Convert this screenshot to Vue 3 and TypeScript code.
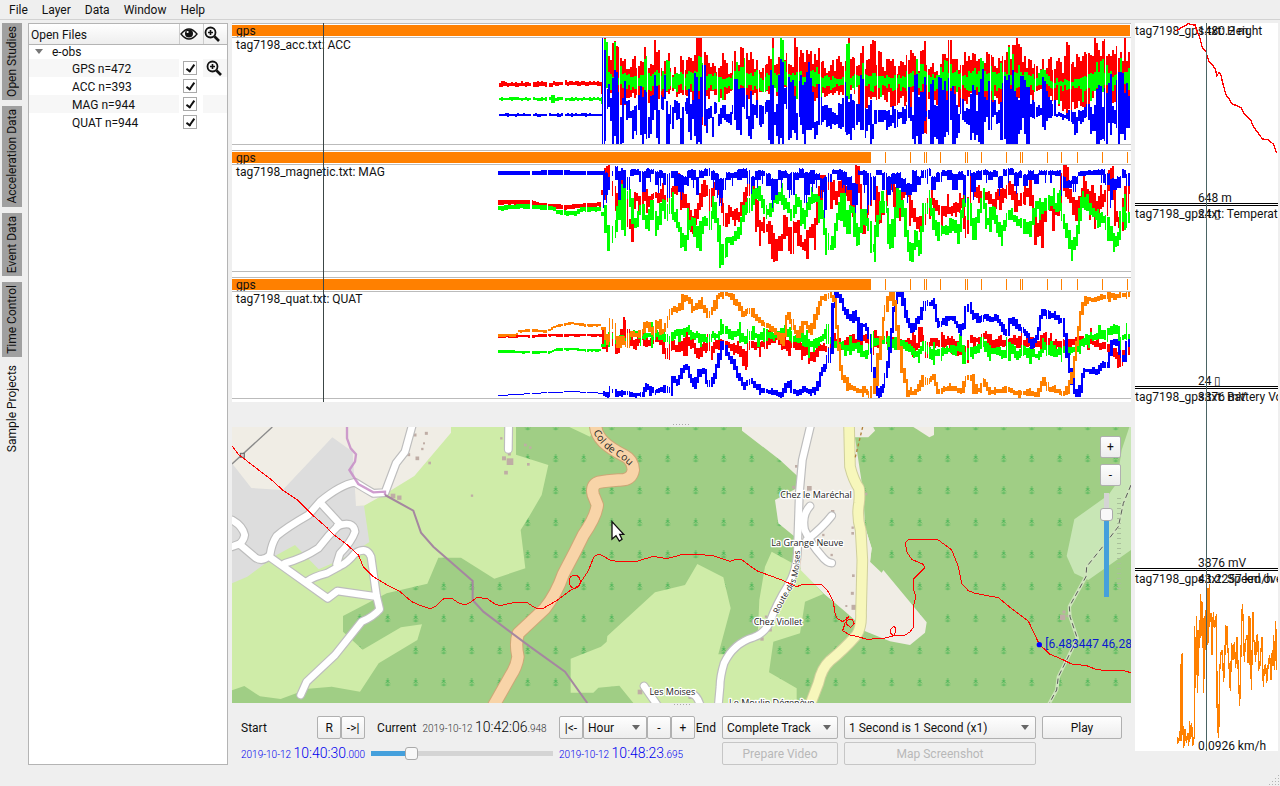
<script setup lang="ts">
import { ref, computed } from 'vue'

type Pt = [number, number]
type Band = [number, number, number]
interface Channel { color: string; d: string }
interface Track { file: string; full: boolean; origin: number; channels: Channel[] }

const menus = ['File', 'Layer', 'Data', 'Window', 'Help']
const tabs = [
  { label: 'Open Studies', docked: true, size: 'a' },
  { label: 'Acceleration Data', docked: true, size: 'b' },
  { label: 'Event Data', docked: true, size: 'c' },
  { label: 'Time Control', docked: true, size: 'd' },
  { label: 'Sample Projects', docked: false, size: 'e' },
]
const files = ref([
  { name: 'GPS n=472', on: true, zoom: true },
  { name: 'ACC n=393', on: true, zoom: false },
  { name: 'MAG n=944', on: true, zoom: false },
  { name: 'QUAT n=944', on: true, zoom: false },
])

function random(seed: number): () => number {
  let s = seed
  return () => {
    s = (s * 1664525 + 1013904223) % 4294967296
    return s / 4294967296
  }
}

function nums(src: string): number[] {
  return src.trim().split(/[\s,]+/).map(Number)
}
function pairs(src: string): Pt[] {
  const n = nums(src)
  const out: Pt[] = []
  for (let i = 0; i + 1 < n.length; i += 2) out.push([n[i], n[i + 1]])
  return out
}
function triples(src: string): Band[] {
  const n = nums(src)
  const out: Band[] = []
  for (let i = 0; i + 2 < n.length; i += 3) out.push([n[i], n[i + 1], n[i + 2]])
  return out
}
function at(pts: Pt[], x: number): number {
  if (x <= pts[0][0]) return pts[0][1]
  for (let i = 1; i < pts.length; i++) {
    if (x <= pts[i][0]) {
      const [x0, y0] = pts[i - 1]
      const [x1, y1] = pts[i]
      return y0 + ((y1 - y0) * (x - x0)) / (x1 - x0)
    }
  }
  return pts[pts.length - 1][1]
}
function nearest(bands: Band[], x: number): Band {
  let best = bands[0]
  for (const b of bands) if (Math.abs(b[0] - x) < Math.abs(best[0] - x)) best = b
  return best
}
// Peaks last two columns; elsewhere the curve stays at or below its resting level.
function spiky(pts: Pt[], x: number, rest: number): number {
  for (const [px, py] of pts) if (Math.abs(px - x) < 2) return py
  return Math.max(rest, at(pts, x))
}

const START = 498
const BURST = 602
const END = 1129
const gaps = new Set(nums('530 531 547 563 586 610 611 613 614 626 628 641 654 666 668 670 708 710 724 748 750 765 792 827 829 869 872 885 924 926 928 940 966 969 982 1007 1022 1047 1062 1106 1121 1127'))

function bar(x: number, w: number, top: number, bottom: number): string {
  const t = Math.round(top)
  const h = Math.max(1, Math.round(bottom) - t)
  return `M${x} ${t}h${w}v${h}h${-w}z`
}

function lineChannel(color: string, src: string, seed: number, calm: number, wild: number): Channel {
  const pts = pairs(src)
  const rnd = random(seed)
  let d = ''
  let prev = at(pts, START)
  for (let x = START; x <= END;) {
    const w = rnd() < 0.4 ? 3 : 2
    const y = at(pts, x)
    const burst = x >= BURST
    const up = burst ? 1 + rnd() * wild * (rnd() < 0.25 ? 2 : 0.6) : calm
    const down = burst ? 2 + rnd() * wild * (rnd() < 0.25 ? 2 : 0.6) : calm + rnd()
    const t = Math.min(y, burst ? prev : y) - up
    const b = Math.max(y, burst ? prev : y) + down
    prev = y
    for (let k = 0; k < w; k++) if (!gaps.has(x + k) && x + k <= END) d += bar(x + k, 1, t, b)
    x += w
  }
  return { color, d }
}

const accBlue = triples(`602 38 144 604 48 144 607 84 110 610 90 130 612 78 144 615 64 144 618 90 144 621 96 144 624 80 110 627 100 125 630 108 120
632 110 140 635 105 135 637 95 110 639 86 144 643 88 144 646 88 144 648 100 144 650 95 135 653 73 120 655 73 144 658 100 144 661 95 110 664 75 100 667 98 144
670 105 130 674 100 115 677 100 125 680 100 144 684 98 115 688 88 140 692 80 130 694 73 144 697 75 144 699 75 144 702 65 125 706 108 140 709 105 120 712 110 138
715 100 115 719 108 130 722 105 120 728 112 125 732 105 115 735 77 130 738 88 140 742 88 110 746 95 120 748 110 144 751 90 140 754 100 120 760 105 130 764 100 115
768 88 140 771 68 144 773 105 130 776 88 140 779 58 144 781 60 144 785 85 110 787 75 144 790 80 140 794 78 144 796 90 140 799 75 125 802 70 140 804 78 144
807 60 130 810 72 130 815 115 144 818 77 125 822 105 125 828 105 130 834 112 125 840 95 130 845 80 135 848 80 140 852 100 130 856 104 125 861 70 130 864 108 140
868 105 125 871 100 144 876 110 125 882 110 122 888 110 130 893 105 130 899 112 120 904 105 125 908 86 128 912 103 144 915 74 144 918 95 144 921 90 144 924 75 130
927 110 120 931 78 144 935 105 140 939 76 144 943 75 144 946 77 144 950 90 130 953 84 144 957 105 144 960 97 120 967 105 128 972 85 140 976 110 144 979 77 144
981 68 144 985 95 125 989 80 130 993 100 120 997 110 125 1000 82 140 1004 75 144 1008 73 144 1012 70 144 1016 95 144 1020 75 130 1024 80 140 1027 85 144
1032 100 120 1038 105 118 1042 76 130 1046 90 125 1052 100 120 1058 112 118 1064 113 120 1070 110 125 1075 112 140 1080 110 125 1086 104 120 1092 105 135
1096 85 144 1100 85 144 1104 87 144 1108 72 135 1112 105 130 1116 80 128 1119 70 144 1124 72 144 1127 82 128`)

const accRedTop = pairs(`604 38 606 46 610 60 612 39 615 40 618 45 621 55 624 60 628 65 632 54 636 64 640 60 644 46 648 63 652 63 655 44 657 44 661 67 665 60 668 48 671 66 675 64
678 68 681 58 684 66 688 55 692 58 696 38 699 38 702 60 705 55 708 58 713 67 718 60 722 55 726 62 730 68 735 55 738 62 741 50 744 58 748 55 751 52 755 60
758 66 762 62 766 60 770 50 772 38 774 60 778 50 781 38 784 58 788 55 792 60 795 38 797 60 801 50 804 58 807 52 810 53 814 57 818 52 822 62 826 66 830 60
835 62 840 58 843 65 846 42 848 42 852 60 857 62 861 45 864 60 868 56 871 38 873 38 876 66 879 54 883 62 888 62 891 56 895 66 900 60 905 58 909 52 914 55
918 62 923 42 926 60 932 62 938 66 943 58 949 40 953 58 958 60 962 58 967 52 972 55 975 52 979 54 983 60 989 50 994 62 1000 55 1005 52 1008 38 1013 38
1017 38 1020 50 1025 60 1030 55 1034 62 1038 67 1042 60 1046 64 1049 50 1052 62 1056 60 1061 64 1067 42 1070 58 1074 60 1078 52 1082 50 1086 46 1090 48
1095 38 1098 48 1102 45 1104 38 1108 52 1112 50 1116 38 1120 55 1124 38 1127 52`)
const accRedBottom = triples(`603 38 90 612 0 98 622 0 102 635 0 95 648 0 100 660 0 99 668 0 92 680 0 96 690 0 98 699 0 118 703 0 122 708 0 96 720 0 99 735 0 90 750 0 97 765 0 90 775 0 92 802 0 103
808 0 103 816 0 97 822 0 98 834 0 96 845 0 95 852 0 90 862 0 110 870 0 102 878 0 99 886 0 98 892 0 110 900 0 102 908 0 105 914 0 96 924 0 130 930 0 100 938 0 104 943 0 112 950 0 98
962 0 104 972 0 98 985 0 110 996 0 100 1010 0 95 1028 0 98 1038 0 94 1050 0 98 1057 0 104 1066 0 112 1076 0 105 1086 0 110 1092 0 96 1104 0 98 1112 0 108 1121 0 134 1127 0 100`)
const accGreenTop = pairs(`603 38 605 40 607 72 611 75 614 44 617 76 620 64 624 74 632 78 640 77 645 58 648 75 656 70 660 76 667 62 672 76 681 72 684 77 688 70 692 72 699 56 702 64 706 76
715 75 722 78 730 78 736 62 741 66 743 58 748 76 757 72 762 78 768 74 772 50 774 72 781 38 784 60 790 74 797 70 803 76 808 60 811 72 816 66 820 76 832 78
842 76 846 43 848 43 851 76 858 74 862 61 866 76 874 74 882 78 890 76 900 77 908 72 916 58 921 64 928 74 934 76 940 68 945 60 950 66 955 72 966 75 974 66 981 59
986 74 990 68 996 76 1000 62 1008 48 1012 52 1018 64 1024 72 1030 74 1036 80 1040 68 1043 68 1050 80 1060 81 1074 80 1082 76 1090 74 1096 62 1101 60 1106 66 1112 76 1120 60 1125 72 1129 66`)

function accChannels(): Channel[] {
  const r = random(71)
  let red = ''
  let green = ''
  let blue = ''
  for (let x = 499; x < BURST; x += 2) {
    if (gaps.has(x)) continue
    const lift = x > 552 ? 2 : 0
    const tail = x > 599 ? 8 : 0
    red += bar(x, 2, 83 - lift / 2 - Math.floor(r() * 2.4), 86 - lift / 2 + Math.floor(r() * 1.6) + tail)
    const g = x > 549 && x < 554
    green += bar(x, 2, 98 - (g ? 3 : Math.floor(r() * 1.6)), 100 + (g ? 3 : Math.floor(r() * 1.6)) + tail / 2)
    blue += bar(x, 2, 114 - Math.floor(r() * 1.4), 116 + Math.floor(r() * 1.3))
  }
  const accGaps = new Set(nums('619 637 647 660 671 684 703 717 733 745 758 764 787 798 820 844 855 864 877 896 907 927 949 961 990 1003 1035 1053 1070 1087 1105 1117'))
  for (let x = BURST; x <= END; x += 2) {
    const rt = spiky(accRedTop, x, 52) + (r() - 0.3) * 14
    const rb = nearest(accRedBottom, x)[2] + (r() - 0.6) * 10
    const gt = spiky(accGreenTop, x, 73) + (r() - 0.5) * 5
    const gb = 88 + (r() - 0.5) * 8 + (r() < 0.05 ? 12 : 0)
    const b = nearest(accBlue, x)
    const span = b[2] - b[1]
    const long = span > 40
    const bt = b[1] + r() * (long ? 24 : span * 0.3) * (r() < 0.55 ? 1 : 0.1)
    const bb = long && r() < 0.5 ? b[2] : b[2] - r() * Math.min(12, span * 0.3)
    for (let k = 0; k < 2; k++) {
      const c = x + k
      if (c > END || accGaps.has(c)) continue
      if (c > 603) {
        red += bar(c, 1, Math.max(38, rt), rb)
        green += bar(c, 1, Math.max(38, gt), gb)
      }
      if (c !== 603 && c !== 606) blue += bar(c, 1, Math.max(38, c === 602 ? 38 : bt), c < 605 ? 144 : Math.min(144, bb))
    }
  }
  return [{ color: '#ff0000', d: red }, { color: '#00ff00', d: green }, { color: '#0000ff', d: blue }]
}

const magRed = `498 202 530 202 540 205 565 207 600 204 603 168 606 178 610 190 614 210 618 185 620 175 624 200 627 230 630 205 634 195 638 202 642 185 646 205 650 195 656 195 662 200
668 190 674 190 680 188 684 205 688 220 690 230 694 215 698 205 702 185 708 195 714 185 720 200 724 225 728 212 736 215 742 210 746 185 752 190 758 230 764 225 770 228 773 255
776 235 779 250 784 215 787 240 790 250 793 215 796 240 802 245 808 230 812 235 818 190 826 180 832 200 836 190 840 185 846 195 852 200 855 170 858 200 862 230 868 200 872 190 878 220 884 195
890 178 896 210 902 190 906 190 912 220 916 220 920 225 924 210 928 200 934 205 940 210 946 210 952 210 958 205 962 200 964 245 968 185 974 190 980 200 986 195 992 205
998 190 1002 195 1008 186 1014 205 1020 200 1026 190 1030 205 1034 230 1038 235 1042 210 1046 200 1050 208 1056 213 1062 175 1068 195 1074 222 1080 190 1086 195 1092 210
1098 200 1104 195 1108 180 1110 170 1114 215 1119 225 1122 195 1127 190`
const magGreen = `498 208 520 206 540 207 552 208 556 212 575 213 580 209 600 209 603 225 607 248 610 238 614 225 618 195 620 235 624 195 628 190 632 230 636 215 640 205 644 230 650 205
656 230 660 195 664 215 668 200 672 215 678 230 682 245 688 220 692 225 696 245 700 225 706 220 712 208 717 240 720 255 724 240 730 240 736 235 742 210 748 205 754 190
760 200 766 215 772 200 778 195 784 205 790 215 796 200 802 220 808 200 812 195 818 205 824 235 828 250 832 240 836 215 840 195 846 230 850 200 855 245 862 210 868 230
871 260 875 220 880 200 884 210 888 250 892 230 896 195 900 205 904 235 909 255 914 235 918 250 922 210 928 200 934 235 938 225 944 235 950 220 956 235 962 200 966 210
972 235 978 205 982 200 986 225 992 210 998 235 1004 220 1008 215 1014 220 1020 225 1026 230 1030 220 1036 200 1040 210 1046 200 1052 205 1058 205 1063 225 1068 245
1072 245 1076 230 1080 200 1088 210 1096 215 1104 220 1108 230 1112 240 1116 245 1120 205 1124 225 1127 215`
const magBlue = triples(`603 172 200 606 174 195 608 178 190 611 172 176 615 168 180 619 172 200 621 170 180 624 172 188 628 178 190 630 171 176 636 171 175 640 172 182 643 173 192
647 170 178 652 171 174 656 173 185 660 172 178 664 174 185 668 175 198 671 172 178 675 173 186 680 176 192 684 178 185 688 172 178 693 171 180 697 178 195 700 172 178
706 170 176 712 172 180 717 175 190 720 180 198 723 180 190 727 174 180 733 174 178 739 171 180 744 170 178 748 172 184 752 178 186 757 172 180 763 172 176 768 175 186
773 180 200 776 180 195 779 172 180 785 172 178 788 175 190 792 174 195 796 174 180 800 170 178 806 174 195 812 172 184 817 175 180 821 180 190 825 178 210 829 175 182
833 171 174 840 171 180 845 173 185 848 178 190 855 185 205 860 172 175 864 172 185 868 175 205 872 178 200 878 171 175 884 174 190 888 178 195 893 175 184 898 174 188
903 180 192 908 185 195 914 172 192 918 178 185 922 172 178 928 170 176 932 178 190 938 174 182 944 172 176 949 172 180 954 175 190 960 173 180 964 176 195 968 172 176
973 174 192 978 172 180 984 171 175 990 173 180 995 172 177 1000 178 188 1005 171 176 1010 170 175 1016 174 186 1020 172 178 1024 176 186 1030 172 180 1036 175 184
1040 172 175 1050 172 175 1058 172 176 1063 178 188 1068 182 188 1074 178 184 1080 173 176 1090 172 175 1100 171 175 1108 175 185 1110 180 200 1114 180 190 1118 178 188
1124 171 178 1127 175 186`)

function magBlueChannel(): Channel {
  const r = random(19)
  let d = ''
  for (let x = START; x <= END; x++) {
    if (gaps.has(x)) continue
    if (x < 603) d += bar(x, 1, x > 540 && x < 570 ? 170 : 171, 175)
    else {
      const b = nearest(magBlue, x)
      d += bar(x, 1, b[1] - 1 - Math.floor(r() * 2), b[2] + (r() < 0.1 ? 8 : 0))
    }
  }
  return { color: '#0000ff', d }
}

const quatOrange = `498 335 515 335 518 331 530 330 545 331 555 326 570 323 585 325 600 325 603 335 606 340 609 320 612 330 616 345 620 335 624 350 628 330 632 335 640 333 645 320 650 335
656 320 660 335 664 325 670 310 675 310 680 300 684 297 688 300 692 310 697 300 702 308 706 315 712 305 716 297 720 293 730 295 736 305 742 315 748 308 756 320 764 325 772 330
780 342 783 330 786 310 790 325 796 335 802 320 808 330 814 315 820 298 828 294 833 300 836 340 840 375 845 385 852 388 858 392 862 388 868 395 873 380 877 350 881 325
885 300 889 293 893 305 896 340 900 370 906 392 912 393 918 385 922 376 926 382 932 375 936 392 944 388 952 388 960 391 964 378 968 376 972 388 978 390 982 380 988 392
996 391 1004 388 1010 391 1020 393 1034 394 1038 388 1042 378 1046 388 1056 390 1062 394 1066 390 1072 365 1076 335 1080 305 1084 298 1090 299 1100 297 1110 295 1118 295 1127 294`
const quatBlue = `498 395 515 394 530 393 550 392 570 391 590 392 602 393 606 395 610 390 614 394 620 392 630 394 640 394 645 385 650 392 656 390 662 387 668 390 670 378 676 383 680 370
684 365 688 375 692 385 698 372 702 370 706 385 712 380 716 360 719 345 721 345 724 352 730 360 736 375 742 385 748 380 756 388 764 391 772 392 780 395 784 385 787 382
790 390 796 393 802 388 808 392 815 388 820 370 824 365 828 350 830 310 834 293 838 298 842 308 848 320 854 310 857 335 860 325 864 325 868 340 871 370 874 385 878 395
882 385 886 365 889 340 892 310 896 293 900 296 904 315 910 330 916 320 922 302 928 305 932 300 936 325 944 318 952 318 958 330 962 325 965 300 970 312 976 320 982 315
988 320 994 316 1000 325 1004 335 1008 320 1014 325 1020 330 1026 335 1030 345 1036 335 1040 310 1046 313 1054 316 1060 320 1064 350 1070 380 1074 395 1078 390 1082 370
1088 370 1094 372 1100 366 1106 365 1110 342 1114 340 1118 352 1122 360 1124 345 1129 340`
const quatRed = `498 336 530 336 545 335 600 335 603 350 606 340 612 335 616 350 620 330 626 335 632 345 640 335 646 345 652 338 660 340 664 360 668 340 674 350 680 345 686 340 692 345
696 355 702 345 710 350 716 343 726 345 736 348 743 358 748 345 756 343 764 345 772 335 780 335 784 350 790 340 796 345 804 350 810 358 818 345 826 350 834 342 842 345
848 335 856 345 862 335 870 345 878 338 885 340 892 340 900 345 908 342 916 345 918 330 922 348 932 340 940 345 948 340 956 345 964 350 968 338 976 340 984 335 990 345
998 340 1004 345 1010 338 1018 345 1026 340 1036 345 1042 335 1048 345 1058 344 1068 343 1078 340 1088 340 1096 345 1104 345 1110 350 1118 355 1124 352 1129 348`
const quatGreen = `498 351 530 352 550 352 555 349 600 350 603 335 608 335 616 340 624 340 632 332 640 336 646 335 652 335 660 335 666 340 672 335 680 332 685 328 690 335 698 335 704 340
710 335 716 335 722 328 728 335 736 333 742 340 750 335 760 337 770 335 780 335 785 330 792 340 800 335 808 345 818 340 822 335 830 342 838 345 846 350 854 345 862 355
870 345 878 340 884 340 892 340 900 343 908 350 916 355 922 345 930 355 938 352 944 350 952 350 958 345 962 360 968 350 974 350 980 340 986 350 994 350 1002 355 1008 345
1016 355 1024 350 1032 355 1038 355 1042 345 1050 352 1060 350 1070 350 1078 345 1086 337 1094 337 1100 335 1108 330 1114 325 1118 340 1124 335 1129 340`

const tracks: Track[] = [
  { file: 'tag7198_acc.txt: ACC', full: true, origin: 38, channels: accChannels() },
  {
    file: 'tag7198_magnetic.txt: MAG', full: false, origin: 165,
    channels: [lineChannel('#ff0000', magRed, 5, 2, 10), lineChannel('#00ff00', magGreen, 8, 2, 8), magBlueChannel()],
  },
  {
    file: 'tag7198_quat.txt: QUAT', full: false, origin: 292,
    channels: [
      lineChannel('#ff0000', quatRed, 3, 1, 6),
      lineChannel('#00ff00', quatGreen, 4, 1, 6),
      lineChannel('#0000ff', quatBlue, 6, 0, 2),
      lineChannel('#ff8000', quatOrange, 7, 1, 2),
    ],
  },
]
const fixes = [885, 910, 924, 926, 940, 965, 967, 981, 1006, 1020, 1022, 1047, 1061, 1077, 1102, 1127]

const gauges = [
  {
    title: 'tag7198_gps.txt: Height', max: '1480.2 m', min: '648 m', color: '#ff0000',
    line: '155,48 165,40 180,33 190,26 205,30 210,30 215,45 225,70 232,98 243,110 248,128 252,140 262,150 272,165 275,183 282,173 288,180 292,200 303,240 312,252 322,268 335,272 348,278 360,300 378,318 385,335 400,355 412,372 430,375 445,388 450,400 455,415',
  },
  { title: 'tag7198_gps.txt: Temperature', max: '24 ▯', min: '24 ▯', color: '', line: '' },
  { title: 'tag7198_gps.txt: Battery Voltage', max: '3876 mV', min: '3876 mV', color: '', line: '' },
  {
    title: 'tag7198_gps.txt: Speed over ground', max: '43.2257 km/h', min: '0.0926 km/h', color: '#ff8000',
    line: '157,544 157,524 161,540 165,506 168,536 168,308 172,269 172,448 176,556 180,500 184,540 188,510 191,550 194,476 197,530 200,480 203,551 208,520 209,188 212,376 215,158 218,391 220,200 224,256 227,92 230,220 233,116 236,391 239,160 242,261 243,140 245,261 246,141 247,246 249,76 251,240 253,63 255,176 258,150 261,276 265,146 268,196 271,186 274,154 277,486 281,526 284,326 288,270 292,262 296,358 300,266 302,186 304,246 306,190 308,246 312,306 316,383 320,241 324,290 328,236 332,316 336,221 340,330 344,431 347,300 352,122 355,180 358,296 361,240 366,216 369,300 372,160 375,306 376,166 379,381 384,146 386,230 388,240 392,296 394,220 398,216 401,320 404,316 411,221 415,371 418,310 422,306 425,361 430,300 434,276 438,350 442,260 444,310 446,216 449,321 452,173 455,320',
  },
]

const range = ref('Complete Track')
const unit = ref('Hour')
const speed = ref('1 Second is 1 Second (x1)')
const time = ref(20)
const mapZoom = ref(84)
const timeStyle = computed(() => ({ '--fill': `${time.value}%` }))
const zoomStyle = computed(() => ({ '--fill': `${mapZoom.value}%` }))

const whiteRoads = [
  'M6,300 Q38,318 44,345 Q42,360 28,374',
  'M6,380 L28,372 L75,412 Q97,428 120,405 Q125,370 140,348 Q170,322 235,285 L270,245 Q330,195 375,187 Q400,203 430,220 L465,218 L498,130 L525,95 L547,15',
  'M118,410 L293,535 L322,513 L440,530',
  'M270,247 L330,312 Q295,345 265,385 Q220,415 165,430',
  'M322,318 Q370,300 375,335 Q365,365 330,400 L320,432',
  'M230,485 Q250,470 290,460 L330,438 Q350,430 375,400 Q410,378 423,410 L440,530 L449,568 Q430,590 395,605 L315,705 L230,785 L212,825',
  'M836,15 L835,88',
  'M1742,15 L1717,120 L1708,220 L1702,400 Q1700,450 1675,495 Q1640,550 1618,610 Q1600,642 1570,652 Q1510,670 1482,730 Q1470,770 1470,800 L1465,855',
  'M1740,258 Q1715,285 1724,330 Q1745,375 1775,408 Q1790,428 1805,429',
  'M1805,287 Q1780,320 1730,360',
  'M1242,798 L1285,860',
  'M1385,822 Q1402,825 1412,860',
]
const colRoad = 'M1097,10 Q1095,40 1120,65 Q1140,85 1185,108 Q1208,120 1210,150 Q1205,182 1165,180 Q1130,182 1105,187 Q1082,195 1090,225 L1102,255 Q1098,290 1060,345 L1035,395 L1000,462 Q980,520 945,565 L865,640 Q855,670 864,710 Q860,740 840,770 L792,855'
const yellowRoad = 'M1857,10 L1860,140 Q1870,180 1887,205 Q1890,225 1887,250 Q1880,290 1892,330 L1897,420 L1893,580 Q1895,620 1880,645 Q1840,690 1800,722 Q1775,745 1765,790 L1740,855'
const gpsPath = 'M6,78 25,103 60,130 125,180 160,212 200,238 245,283 290,322 310,343 350,373 385,405 400,440 430,470 480,500 510,515 545,545 575,558 600,566 615,560 640,537 665,535 685,548 705,555 720,548 740,533 770,535 795,552 810,557 850,548 890,547 905,557 922,566 940,565 980,542 1020,512 1045,498 1075,452 1092,410 1105,403 1115,406 1140,420 1165,425 1220,424 1270,409 1310,416 1355,404 1405,404 1445,406 1500,424 1515,419 1535,419 1580,452 1620,467 1655,480 1700,500 1720,493 1775,493 1795,515 1810,545 1815,580 1822,596 1838,605 1858,590 1848,592 1848,612 1862,622 1873,610 1868,600 1855,598 1845,610 1838,632 1860,645 1885,650 1910,658 1960,655 1990,648 1982,640 1981,628 1992,619 1998,625 1995,640 1990,648 2025,645 2040,636 2050,622 2050,560 2058,530 2050,508 2052,475 2085,443 2080,433 2045,418 2030,395 2026,368 2035,359 2125,360 2165,390 2185,440 2195,490 2215,512 2235,520 2305,533 2350,570 2395,603 2410,635 2428,673 2460,703 2490,715 2525,732 2570,737 2595,747 2620,751 2680,752 2703,758'
const houses = [
  [555, 45, 9], [589, 40, 9], [582, 70, 6], [577, 87, 7], [562, 115, 11], [536, 104, 9], [599, 129, 8], [840, 125, 20], [822, 115, 12], [828, 158, 11], [814, 55, 7], [886, 75, 8], [901, 83, 7], [895, 133, 8], [838, 102, 9],
  [489, 228, 14], [508, 233, 13], [726, 227, 7], [1699, 139, 8], [1738, 205, 14], [1691, 202, 9], [1808, 275, 10], [1780, 345, 7], [1805, 405, 7], [1570, 604, 10], [1621, 630, 9], [1596, 657, 10], [1608, 590, 7], [1230, 816, 14], [1380, 832, 9],
  [1872, 562, 15], [1867, 520, 9], [1870, 467, 8], [1868, 340, 8], [1868, 323, 7], [1849, 558, 6], [1908, 222, 8], [2498, 592, 16], [2502, 576, 9], [2513, 588, 7],
]
</script>

<template>
  <div class="app">
    <nav class="menubar">
      <button v-for="m in menus" :key="m" type="button">{{ m }}</button>
    </nav>

    <main class="workspace">
      <div class="tabs">
        <button v-for="t in tabs" :key="t.label" type="button" :class="['tab', t.size, { docked: t.docked }]"><span>{{ t.label }}</span></button>
      </div>

      <section class="files">
        <table>
          <colgroup><col><col class="narrow"><col class="narrow"></colgroup>
          <thead>
            <tr>
              <th scope="col">Open Files</th>
              <th scope="col" aria-label="Visible">
                <svg class="eye" width="18" height="12" viewBox="0 0 18 12"><path d="M1 6Q5 1 9 1T17 6Q13 11 9 11T1 6z" fill="none" stroke="#111" stroke-width="1.3" /><circle cx="9" cy="5.5" r="4" fill="#111" /><circle cx="7.6" cy="4" r="1.1" fill="#fff" /></svg>
              </th>
              <th scope="col" aria-label="Zoom to data">
                <svg class="lens" width="16" height="16" viewBox="0 0 16 16" fill="none" stroke="#111"><circle cx="6.5" cy="6.5" r="5" stroke-width="1.8" /><path d="M4 6.5h5M6.5 4v5" stroke-width="1.6" /><path d="M10.5 10.5L15 15" stroke-width="2.6" /></svg>
              </th>
            </tr>
          </thead>
          <tbody>
            <tr class="group"><td colspan="3"><span class="caret"></span>e-obs</td></tr>
            <tr v-for="(f, i) in files" :key="f.name" class="file">
              <td><label :for="'f' + i">{{ f.name }}</label></td>
              <td class="check"><input :id="'f' + i" v-model="f.on" type="checkbox"></td>
              <td class="lenscell">
                <svg v-if="f.zoom" class="lens" width="16" height="16" viewBox="0 0 16 16" fill="none" stroke="#111"><circle cx="6.5" cy="6.5" r="5" stroke-width="1.8" /><path d="M4 6.5h5M6.5 4v5" stroke-width="1.6" /><path d="M10.5 10.5L15 15" stroke-width="2.6" /></svg>
              </td>
            </tr>
          </tbody>
        </table>
      </section>

      <div class="center">
        <section class="tracks">
          <article v-for="t in tracks" :key="t.file" class="track">
            <div class="strip">
              <svg viewBox="232 0 899 11" preserveAspectRatio="none" shape-rendering="crispEdges">
                <rect x="232" y="0" :width="t.full ? 898 : 639" height="11" fill="#ff8000" />
                <template v-if="!t.full"><rect v-for="x in fixes" :key="x" :x="x" y="0" width="1" height="11" fill="#ff8000" /></template>
              </svg>
              <span>gps</span>
            </div>
            <div class="plot">
              <svg :viewBox="`232 ${t.origin} 899 106`" preserveAspectRatio="none" shape-rendering="crispEdges">
                <path v-for="c in t.channels" :key="c.color" :d="c.d" :fill="c.color" />
              </svg>
              <span>{{ t.file }}</span>
            </div>
          </article>
          <i class="cursor"></i>
        </section>
        <div class="splitter"><i class="dots"></i></div>

        <section class="map">
          <svg class="ground" viewBox="6 21 2697 828" preserveAspectRatio="xMinYMin slice">
            <defs>
              <pattern id="forest" x="431" y="546" width="84" height="96" patternUnits="userSpaceOnUse">
                <rect width="84" height="96" fill="#a0ce85" />
                <path d="M42 36V61M37 44H47M35 57H49M35 52L42 45L49 52" fill="none" stroke="#3bb04f" stroke-width="2" />
              </pattern>
              <path id="colPath" d="M1090,36 Q1108,76 1150,102 Q1190,122 1216,160" />
              <path id="moisesPath" d="M1645,582 Q1660,545 1690,500 Q1710,465 1710,380" />
            </defs>
            <rect x="6" y="21" width="2697" height="828" fill="url(#forest)" />
            <g fill="#cfeca8">
              <path d="M6,21H858V104L955,135 935,225 900,285 872,330 886,445 793,476 693,413H625L592,491 470,520 339,588V635L398,689 513,622 576,613 562,660 446,730 390,815 305,800 235,806 152,837 90,829 43,798 6,811z" />
              <path d="M1018,21L1080,50 1095,21z" />
              <path d="M1022,716L1113,680 1130,665 1132,648 1275,517 1365,495 1402,432 1480,472 1502,565 1465,703H1500L1480,745 1465,849H1210L1168,797 1105,803 1090,818H1022z" />
              <path d="M1625,395L1685,428 1715,450 1780,522 1725,545 1710,640 1630,665 1617,757 1700,805V849H1465L1482,740 1540,670 1583,650 1588,540 1605,440z" />
            </g>
            <g fill="#f0ede5">
              <path d="M6,21H663V38L553,168 465,222 402,257 379,258 200,220H6z" />
              <path d="M1536,21V32L1650,120 1702,168 1700,205 1635,240 1645,310 1700,355 1712,450 1780,520 1840,570 1880,605 1900,600 1925,385 1905,320 1900,220 1870,21z" />
              <path d="M1865,21H1930L1935,32 1915,52H1865z" />
              <path d="M2050,21L2098,52 2112,45V21z" />
              <path d="M1905,320L1925,385 1920,425 1955,458 1960,450 2090,607 2085,638 2040,675 1980,664 1902,632z" />
            </g>
            <path d="M6,130L64,204 158,210 307,52 368,95 378,258 402,257 418,366 375,395 330,420 266,448 195,375 140,405 52,470 6,490z" fill="#dddddd" />
            <path d="M2703,21H2698L2675,90 2660,190 2635,225 2533,298 2510,408 2533,460 2575,480 2703,390z" fill="#c8e6b5" />
            <rect v-for="(h, i) in houses" :key="i" :x="h[0] - h[2] / 2" :y="h[1] - h[2] / 2" :width="h[2]" :height="h[2]" fill="#bfada5" />
            <path d="M127,21L6,132" stroke="#8a8a8a" stroke-width="4" />
            <rect x="31" y="100" width="12" height="12" fill="#ccc" stroke="#666" stroke-width="3" />
            <g fill="none" stroke-linejoin="round" stroke-linecap="round">
              <path v-for="r in whiteRoads" :key="'c' + r" :d="r" stroke="#bdbdbd" stroke-width="27" />
              <path v-for="r in whiteRoads" :key="r" :d="r" stroke="#fff" stroke-width="20" />
              <path :d="yellowRoad" stroke="#cfcf9c" stroke-width="35" />
              <path :d="yellowRoad" stroke="#f7f7bb" stroke-width="29" />
              <path :d="colRoad" stroke="#cca777" stroke-width="40" />
              <path :d="colRoad" stroke="#f8d4a8" stroke-width="34" />
              <path d="M2703,195L2680,250 2665,320 2630,365 2570,440 2568,470 2518,560 2520,590 2542,655 2510,720 2485,770 2480,810 2455,855" stroke="#cfe5bd" stroke-width="10" />
              <path d="M2703,195L2680,250 2665,320 2630,365 2570,440 2568,470 2518,560 2520,590 2542,655 2510,720 2485,770 2480,810 2455,855" stroke="#5b5b5b" stroke-width="3" stroke-dasharray="16 10" stroke-linecap="butt" />
              <path d="M1898,21L1875,115" stroke="#b0803a" stroke-width="4" stroke-dasharray="9 8" stroke-linecap="butt" />
            </g>
            <path d="M351,21V55L362,85 378,103 375,125 358,150 385,192 430,217 465,215V225" fill="none" stroke="#c78cc7" stroke-opacity=".85" stroke-width="7" />
            <path d="M465,225L550,272 573,338 610,380 728,483V540L760,575 900,680 1005,755 1072,849" fill="none" stroke="#a587a0" stroke-width="6" />
            <g class="place" text-anchor="middle">
              <text x="1758" y="233">Chez le Maréchal</text>
              <text x="1732" y="377">La Grange Neuve</text>
              <text x="1644" y="614">Chez Viollet</text>
              <text x="1327" y="825">Les Moises</text>
              <text x="1625" y="857">Le Moulin Dégenève</text>
            </g>
            <text class="road"><textPath href="#colPath">Col de Cou</textPath></text>
            <text class="road halo"><textPath href="#moisesPath">Route des Moises</textPath></text>
            <path :d="gpsPath" fill="none" stroke="#ff0000" stroke-width="3" shape-rendering="crispEdges" />
            <ellipse cx="1034" cy="485" rx="17" ry="20" fill="none" stroke="#ff0000" stroke-width="3" shape-rendering="crispEdges" />
            <circle cx="2428" cy="674" r="8" fill="#0000ff" />
            <text x="2446" y="683" class="coord">[6.483447 46.287513]</text>
            <path d="M1146,305V357L1158,347 1168,363 1176,358 1169,343H1181z" fill="#fff" stroke="#111" stroke-width="4" />
          </svg>
          <div class="mapctl">
            <button type="button">+</button>
            <button type="button">-</button>
            <div class="vwrap">
              <input v-model="mapZoom" class="vslider" type="range" min="0" max="100" aria-label="Map zoom" :style="zoomStyle">
              <i class="ticks"></i>
            </div>
          </div>
        </section>

        <section class="controls">
          <i class="dots"></i>
          <div class="cell"><span class="grow">Start</span><button type="button" class="sq">R</button><button type="button" class="sq">-&gt;|</button></div>
          <div class="cell cur"><span>Current</span><time>2019-10-12 <b>10:42:06</b>.948</time></div>
          <div class="cell">
            <button type="button" class="sq">|&lt;-</button>
            <div class="select unit"><select v-model="unit" aria-label="Step unit"><option>Hour</option><option>Minute</option></select></div>
            <button type="button" class="sq">-</button><button type="button" class="sq">+</button>
            <span class="end">End</span>
          </div>
          <div class="select"><select v-model="range" aria-label="Range"><option>Complete Track</option></select></div>
          <div class="select"><select v-model="speed" aria-label="Playback speed"><option>1 Second is 1 Second (x1)</option></select></div>
          <button type="button">Play</button>
          <time class="blue">2019-10-12 <b>10:40:30</b>.000</time>
          <input v-model="time" class="hslider" type="range" min="0" max="100" aria-label="Current time" :style="timeStyle">
          <time class="blue">2019-10-12 <b>10:48:23</b>.695</time>
          <button type="button" disabled>Prepare Video</button>
          <button type="button" disabled>Map Screenshot</button>
        </section>
      </div>

      <aside class="gauges">
        <article v-for="g in gauges" :key="g.title" class="gauge">
          <span class="title">{{ g.title }}</span>
          <svg v-if="g.line" viewBox="30 24 429 540" preserveAspectRatio="none" shape-rendering="crispEdges"><polyline :points="g.line" fill="none" :stroke="g.color" stroke-width="4" /></svg>
          <span class="max">{{ g.max }}</span>
          <span class="min">{{ g.min }}</span>
        </article>
        <i class="cursor"></i>
      </aside>
    </main>
    <svg class="grip" width="12" height="12" viewBox="0 0 12 12" fill="#b4b4b4"><path d="M10 1h1v1h-1zM10 4h1v1h-1zM7 4h1v1h-1zM10 7h1v1h-1zM7 7h1v1h-1zM4 7h1v1h-1zM10 10h1v1h-1zM7 10h1v1h-1zM4 10h1v1h-1zM1 10h1v1h-1z" /></svg>
  </div>
</template>

<style>
body { margin: 0; background: #efefef; }
</style>

<style scoped>
.app { position: relative; display: flex; flex-direction: column; min-height: 100vh; background: #efefef; color: #111; font: 12px/14px Roboto, "Liberation Sans", sans-serif; }
.app *, .app *::before, .app *::after { box-sizing: border-box; }
button, select, input { font: inherit; color: inherit; margin: 0; padding: 0; }
svg { display: block; }
.menubar { display: flex; gap: 14px; height: 20px; padding: 0 9px; border-bottom: 1px solid #d2d2d2; }
.menubar button { border: 0; background: none; }
.workspace { flex: 1; display: flex; padding: 3px 2px 21px; }

.tabs { width: 20px; margin-right: 6px; display: flex; flex-direction: column; gap: 6px; }
.tab { width: 20px; border: 0; background: none; display: flex; align-items: center; justify-content: center; }
.tab.docked { background: #a0a0a0; }
.tab span { writing-mode: vertical-rl; transform: rotate(180deg); white-space: nowrap; }
.tab.a { height: 77px; }
.tab.b { height: 101px; }
.tab.c { height: 63px; }
.tab.d { height: 75px; }
.tab.e { height: 92px; }

.files { width: 200px; margin-right: 4px; background: #fff; border: 1px solid #b4b4b4; }
table { width: 100%; border-collapse: collapse; table-layout: fixed; }
.narrow { width: 24px; }
th { height: 20px; padding: 0; font-weight: 400; text-align: left; border-bottom: 1px solid #b4b4b4; background: linear-gradient(#fff, #eee); }
th:first-child { padding: 3px 0 0 2px; }
th + th { border-left: 1px solid #ccc; }
.eye { margin: 0; }
th .lens { margin: 0; }
td { padding: 0; }
.group td { height: 14px; padding: 0 0 0 6px; line-height: 14px; }
.caret { display: inline-block; border: 4px solid transparent; border-top: 5px solid #777; border-bottom: 0; margin: 0 9px 2px 0; }
.file td { height: 18px; }
.file td:first-child { padding-left: 43px; }
.file label { display: block; padding-top: 2px; }
.file:nth-child(even) td { background: #f7f7f7; }
.file td.check { padding-left: 4px; background: #fff; }
.check input { appearance: none; display: block; width: 14px; height: 14px; border: 1px solid #aaa; background: #fff; position: relative; }
.check input:checked::after { content: ""; position: absolute; left: 4px; top: 1px; width: 5px; height: 9px; border: solid #111; border-width: 0 2px 2px 0; transform: rotate(35deg); }
.lenscell .lens { margin-left: 3px; }

.center { flex: 1; min-width: 0; display: flex; flex-direction: column; margin-right: 4px; }
.tracks { position: relative; background: #fff; height: 379px; overflow: hidden; }
.track { border-top: 1px solid #bbb; margin-bottom: 5px; }
.strip { position: relative; padding: 1px 0; height: 13px; }
.strip svg { width: 100%; height: 11px; }
.strip span { position: absolute; left: 4px; top: 0; }
.plot { position: relative; height: 108px; border: solid #bbb; border-width: 1px 0; }
.plot svg { width: 100%; height: 106px; }
.plot span { position: absolute; left: 4px; top: 0; }
.tracks .cursor { position: absolute; left: 91px; top: 0; width: 1px; height: 100%; background: #3c4646; }
.splitter { height: 25px; display: flex; align-items: flex-end; justify-content: center; padding-bottom: 2px; }
.dots { width: 17px; height: 1px; background: repeating-linear-gradient(90deg, #aaa 0 1px, transparent 1px 3px); }

.map { position: relative; flex: 1; min-height: 276px; overflow: hidden; }
.ground { position: absolute; inset: 0; width: 100%; height: 100%; }
.place { font: 27px "Open Sans", "Noto Sans", sans-serif; fill: #222; stroke: #fff; stroke-width: 8px; stroke-linejoin: round; paint-order: stroke; }
.road { font: 30px "Open Sans", "Noto Sans", sans-serif; fill: #222; }
.halo { font-size: 25px; stroke: #fff; stroke-width: 5px; paint-order: stroke; }
.coord { font: 36px Roboto, sans-serif; fill: #0a1ad0; }
.mapctl { position: absolute; right: 10px; top: 9px; display: flex; flex-direction: column; gap: 6px; align-items: flex-end; }
.mapctl button { width: 21px; height: 22px; }
.vwrap { display: flex; gap: 4px; padding-top: 1px; }
.vslider { appearance: none; writing-mode: vertical-lr; direction: rtl; width: 13px; height: 104px; background: linear-gradient(0deg, #45a0dc var(--fill), #d4d4d4 var(--fill)) center / 5px 100% no-repeat; }
.vslider::-webkit-slider-thumb { appearance: none; width: 13px; height: 13px; border: 1px solid #aaa; border-radius: 3px; background: #f8f8f8; }
.ticks { width: 4px; height: 94px; margin: 5px 0; background: repeating-linear-gradient(#a9bf9b 0 1px, transparent 1px 5px); }

button:not(.tab) { white-space: nowrap; }
.controls button, .mapctl button, .select select { border: 1px solid #b0b0b0; border-radius: 2px; background: linear-gradient(#fefefe, #ededed); }
.controls { position: relative; display: grid; grid-template-columns: 124fr 182fr 157fr 116fr 192fr 80fr; grid-auto-rows: 23px; gap: 3px 6px; align-items: center; padding: 13px 9px 0; }
.controls > .dots { position: absolute; top: 1px; left: 50%; margin-left: -8px; }
.controls > button, .controls > .select { height: 23px; width: 100%; }
.controls button:disabled { color: #b8b8b8; border-color: #c6c6c6; background: #f0f0f0; }
.cell { display: flex; align-items: center; height: 23px; min-width: 0; }
.grow { flex: 1; }
.cell .sq { width: 24px; height: 23px; }
.cur { padding-left: 6px; gap: 6px; }
.end { margin-left: 1px; }
.unit { width: 64px; }
.select { position: relative; height: 23px; }
.select select { appearance: none; width: 100%; height: 23px; padding: 0 4px; }
.select::after { content: ""; position: absolute; right: 7px; top: 9px; border: 4px solid transparent; border-top: 5px solid #666; border-bottom: 0; pointer-events: none; }
time { font-size: 10px; line-height: 16px; color: #333; white-space: nowrap; font-weight: 300; }
time b { font-size: 14px; font-weight: 300; color: #000; }
time.blue, time.blue b { color: #0000ee; }
.hslider { appearance: none; width: 100%; height: 13px; background: linear-gradient(90deg, #45a0dc var(--fill), #d4d4d4 var(--fill)) center / 100% 5px no-repeat; }
.hslider::-webkit-slider-thumb { appearance: none; width: 13px; height: 13px; border: 1px solid #aaa; border-radius: 3px; background: #f8f8f8; }

.gauges { position: relative; width: 143px; margin-bottom: 14px; background: #fff; display: flex; flex-direction: column; overflow: hidden; }
.gauge { position: relative; flex: 1; border-bottom: 3px double #000; overflow: hidden; white-space: nowrap; }
.gauge:nth-child(4) { border-bottom: 0; }
.gauge svg { position: absolute; inset: 0; width: 100%; height: 100%; }
.title, .max, .min { position: absolute; top: 1px; left: 0; }
.max, .min { left: 63px; }
.min { top: auto; bottom: -2px; }
.gauges .cursor { position: absolute; left: 71px; top: 0; width: 1px; height: 100%; background: #4a6464; }
.grip { position: absolute; right: 0; bottom: 0; }
</style>
